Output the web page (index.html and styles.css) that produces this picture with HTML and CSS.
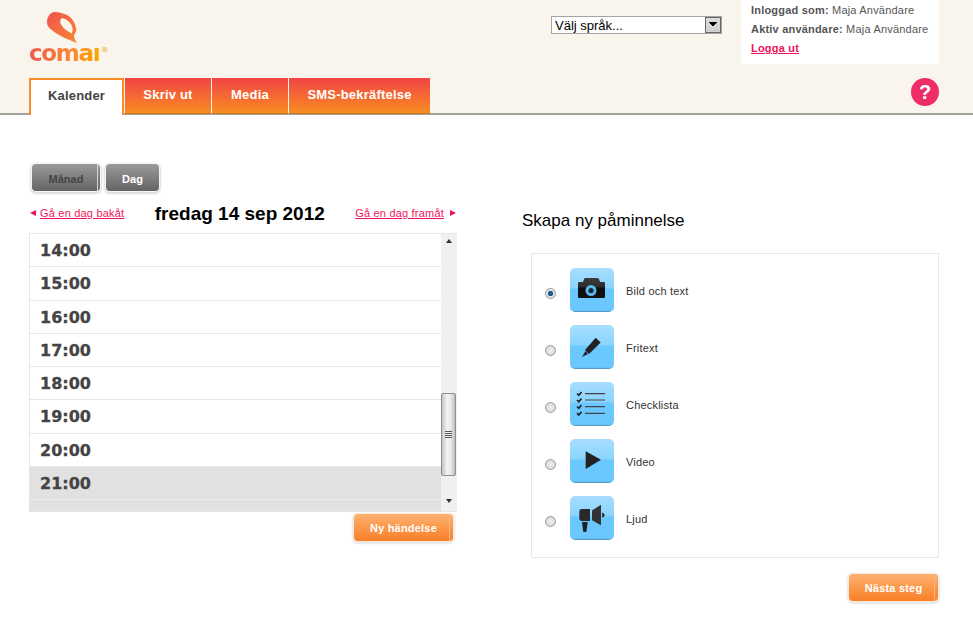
FILE: index.html
```html
<!DOCTYPE html>
<html lang="sv">
<head>
    <meta charset="UTF-8">
    <meta name="viewport" content="width=device-width, initial-scale=1.0">
    <title>Comai Kalender</title>
    <link rel="stylesheet" href="styles.css">
</head>
<body>
    <header class="site-header">
        <div class="header-top">
            <a class="logo" href="#">
                <svg class="logo-mark" viewBox="0 0 32 32" width="32" height="32">
                    <defs>
                        <linearGradient id="logo-grad" x1="0" y1="0" x2="1" y2="1">
                            <stop offset="0" stop-color="#f0504e"/>
                            <stop offset="1" stop-color="#f98a32"/>
                        </linearGradient>
                    </defs>
                    <path fill="url(#logo-grad)" fill-rule="evenodd" d="M7 0C3 1 0 5 0 10C0 14 2 16 5 18C9 22 19 27 30 31C28 28 27 26 27 23C29 20 30 18 29 16C28 11 26 8 24 6C21 3 18 2 14 1C12 0 9 0 7 0ZM15 6C13 8 12.500 10 14 12.500C16 16 20 19 24.500 21.500C26 19 26 16 24.500 13C23 10 19 7 15 6Z"/>
                </svg>
                <span class="logo-text">comaı<sup>®</sup></span>
            </a>
            <select class="lang-select">
                <option>Välj språk...</option>
            </select>
            <div class="user-box">
                <p><b>Inloggad som:</b> Maja Användare</p>
                <p><b>Aktiv användare:</b> Maja Användare</p>
                <p><a href="#" class="logout">Logga ut</a></p>
            </div>
        </div>
        <nav class="tabs">
            <a href="#" class="tab active">Kalender</a>
            <a href="#" class="tab tab-print">Skriv ut</a>
            <a href="#" class="tab tab-media">Media</a>
            <a href="#" class="tab tab-sms">SMS-bekräftelse</a>
            <a href="#" class="help">?</a>
        </nav>
    </header>

    <main class="content">
        <section class="calendar">
            <div class="view-buttons">
                <button class="view-button month">Månad</button>
                <button class="view-button day">Dag</button>
            </div>
            <div class="day-nav">
                <a href="#" class="day-link"><i class="arrow-left"></i><span>Gå en dag bakåt</span></a>
                <h2>fredag 14 sep 2012</h2>
                <a href="#" class="day-link"><span>Gå en dag framåt</span><i class="arrow-right"></i></a>
            </div>
            <div class="day-list">
                <div class="hours">
                    <div class="hour">14:00</div>
                    <div class="hour">15:00</div>
                    <div class="hour">16:00</div>
                    <div class="hour">17:00</div>
                    <div class="hour">18:00</div>
                    <div class="hour">19:00</div>
                    <div class="hour">20:00</div>
                    <div class="hour selected">21:00</div>
                    <div class="hour selected"></div>
                </div>
                <div class="scrollbar">
                    <i class="scroll-up"></i>
                    <div class="thumb"><span class="grip"></span></div>
                    <i class="scroll-down"></i>
                </div>
            </div>
            <div class="list-actions">
                <button class="orange-button new-event">Ny händelse</button>
            </div>
        </section>

        <section class="reminder">
            <h2>Skapa ny påminnelse</h2>
            <div class="reminder-box">
                <label class="type-row">
                    <input type="radio" name="type" checked>
                    <span class="type-icon">
                        <svg viewBox="0 0 44 44" width="44" height="44">
                            <defs>
                                <linearGradient id="cam-grad" x1="0" y1="0" x2="0" y2="1">
                                    <stop offset="0" stop-color="#3c3c3c"/>
                                    <stop offset="0.45" stop-color="#2c2c2c"/>
                                    <stop offset="0.5" stop-color="#0c0c0c"/>
                                    <stop offset="1" stop-color="#111"/>
                                </linearGradient>
                            </defs>
                            <path fill="url(#cam-grad)" d="M9 14h4l1-3q.4-1 1.500-1h12q1.100 0 1.500 1l1 3h4q1 0 1 1v14q0 1-1 1H9q-1 0-1-1V15q0-1 1-1z"/>
                            <circle cx="21" cy="22.500" r="5.500" fill="#58b8ee"/>
                            <circle cx="21" cy="22.500" r="2.600" fill="#15293a"/>
                        </svg>
                    </span>
                    <span class="type-name">Bild och text</span>
                </label>
                <label class="type-row">
                    <input type="radio" name="type">
                    <span class="type-icon">
                        <svg viewBox="0 0 44 44" width="44" height="44">
                            <path fill="#222" d="M25.700 12.700l5 4.800-11.700 11.500-4-4z"/>
                            <path fill="#222" d="M15.500 26l2.500 3-6 3z"/>
                        </svg>
                    </span>
                    <span class="type-name">Fritext</span>
                </label>
                <label class="type-row">
                    <input type="radio" name="type">
                    <span class="type-icon">
                        <svg viewBox="0 0 44 44" width="44" height="44">
                            <g fill="none" stroke="#444" stroke-width="1.200">
                                <path d="M15 11.700h20M15 18h20M15 24.700h20M15 31.300h20"/>
                            </g>
                            <g fill="none" stroke="#222" stroke-width="1.700">
                                <path d="M7 11.500l1.800 1.800 2.700-3.300M7 18l1.800 1.800 2.700-3.300M7 24.500l1.800 1.800 2.700-3.300M7 31.200l1.800 1.800 2.700-3.300"/>
                            </g>
                        </svg>
                    </span>
                    <span class="type-name">Checklista</span>
                </label>
                <label class="type-row">
                    <input type="radio" name="type">
                    <span class="type-icon">
                        <svg viewBox="0 0 44 44" width="44" height="44">
                            <path fill="#222" d="M15.700 12.300l15.300 8.400-15.300 9.300z"/>
                        </svg>
                    </span>
                    <span class="type-name">Video</span>
                </label>
                <label class="type-row">
                    <input type="radio" name="type">
                    <span class="type-icon">
                        <svg viewBox="0 0 44 44" width="44" height="44">
                            <path fill="#2a2a2a" d="M12 13h8v12h-8q-2.700 0-2.700-2.700v-6.600q0-2.700 2.700-2.700z"/>
                            <path fill="#333" d="M22 14.500l9-5.800v20.600l-9-5z"/>
                            <path fill="#333" d="M32 16.700c3.500 0 3.500 4.600 0 4.600z"/>
                            <path fill="#222" d="M12 26h5.700l-1.200 9.500q-1.700 1-3.300 0z"/>
                        </svg>
                    </span>
                    <span class="type-name">Ljud</span>
                </label>
            </div>
            <div class="reminder-actions">
                <button class="orange-button next-step">Nästa steg</button>
            </div>
        </section>
    </main>
</body>
</html>
```

FILE: styles.css
```css
* {
    box-sizing: border-box;
}

body {
    font-family: "Liberation Sans", Arial, sans-serif;
    background-color: #fff;
    color: #444;
    margin: 0;
    height: 644px;
    overflow: hidden;
}

.site-header {
    background-color: #f9f4ec;
    border-bottom: 2px solid #a3a29c;
    height: 115px;
    padding: 0 34px 0 29px;
}

.header-top {
    display: flex;
    align-items: flex-start;
    height: 78px;
}

.logo {
    display: flex;
    flex-direction: column;
    width: 522px;
    padding-top: 12px;
    text-decoration: none;
}

.logo-mark {
    margin-left: 18px;
    display: block;
}

.logo-text {
    font-family: "DejaVu Sans", sans-serif;
    font-weight: bold;
    font-size: 23px;
    line-height: 18px;
    letter-spacing: -1.300px;
    width: 80px;
    background: linear-gradient(90deg, #ee5a50, #f97f38 45%, #fca800 88%);
    -webkit-background-clip: text;
    background-clip: text;
    color: transparent;
}

.logo-text sup {
    font-size: 7px;
    font-weight: normal;
    letter-spacing: 0;
    line-height: 0;
    vertical-align: 9px;
    margin-left: 2px;
    color: #f5c48c;
}

.lang-select {
    appearance: none;
    width: 171px;
    height: 18px;
    margin: 16px 19px 0 0;
    padding: 0 0 0 3px;
    font-family: "Liberation Sans", Arial, sans-serif;
    font-size: 13px;
    color: #000;
    border: 1px solid #a5a5a5;
    border-radius: 0;
    background-color: #fff;
    background-image:
        linear-gradient(45deg, transparent 50%, #000 50%),
        linear-gradient(-45deg, transparent 50%, #000 50%),
        linear-gradient(#dcdcdc, #d0d0d0),
        linear-gradient(#666, #666);
    background-size: 4px 4px, 4px 4px, 14px 14px, 16px 16px;
    background-position: right 8px top 5px, right 4px top 5px, right 1px top 1px, right 0 top 0;
    background-repeat: no-repeat;
}

.user-box {
    background-color: #fff;
    width: 198px;
    height: 64px;
    padding: 1px 10px 0;
}

.user-box p {
    margin: 0;
    font-size: 11px;
    line-height: 19px;
    letter-spacing: 0.2px;
    color: #555;
    white-space: nowrap;
}

.logout {
    color: #f0145a;
    font-weight: bold;
}

.tabs {
    display: flex;
    height: 37px;
    align-items: flex-start;
    gap: 1px;
}

.tab {
    display: block;
    height: 36px;
    line-height: 34px;
    text-align: center;
    color: #fff;
    font-size: 13px;
    font-weight: bold;
    letter-spacing: 0.2px;
    text-decoration: none;
    background: linear-gradient(#f04444, #f98c22);
    border-bottom: 1px solid #c97a1c;
}

.tab.active {
    width: 95px;
    height: 37px;
    line-height: 31px;
    color: #444;
    background: #fff;
    border: 2px solid #f98c22;
    border-bottom: none;
}

.tab-print {
    width: 86px;
}

.tab-media {
    width: 76px;
}

.tab-sms {
    width: 141px;
}

.help {
    margin-left: auto;
    width: 28px;
    height: 28px;
    border-radius: 50%;
    background-color: #ee2d67;
    color: #fff;
    font-size: 20px;
    font-weight: bold;
    line-height: 28px;
    text-align: center;
    text-decoration: none;
}

.content {
    display: flex;
    align-items: flex-start;
    padding: 49px 34px 0 29px;
}

.calendar {
    width: 428px;
}

.view-buttons {
    display: flex;
    gap: 6px;
    padding-left: 3px;
}

.view-button {
    height: 27px;
    padding: 3px 0 0;
    border: none;
    border-radius: 4px;
    font-family: inherit;
    font-size: 11px;
    font-weight: bold;
    background: linear-gradient(#9a9a9a, #646464);
    box-shadow: 0 0 0 1px #f4f4f4, 0 1px 2px 2px #ddd;
    cursor: pointer;
}

.month {
    width: 68px;
    color: #444;
    background:
        linear-gradient(90deg, transparent 65px, #d4d4d4 65px, #d4d4d4 66px, transparent 66px),
        linear-gradient(#9a9a9a, #646464);
}

.day {
    width: 53px;
    color: #fff;
}

.day-nav {
    display: flex;
    align-items: center;
    justify-content: space-between;
    height: 42px;
    padding: 2px 1px 0;
}

.day-nav h2 {
    margin: 1px 0 0;
    font-size: 19px;
    color: #000;
}

.day-link {
    display: flex;
    align-items: center;
    gap: 4px;
    font-size: 11px;
    letter-spacing: 0.2px;
    color: #f0145a;
}

.arrow-left,
.arrow-right {
    width: 0;
    height: 0;
    border-top: 3.500px solid transparent;
    border-bottom: 3.500px solid transparent;
}

.arrow-left {
    border-right: 6px solid #f0145a;
}

.arrow-right {
    border-left: 6px solid #f0145a;
    margin-left: 2px;
}

.day-list {
    display: flex;
    height: 279px;
    border: 1px solid #e6e6e6;
    border-right: none;
    overflow: hidden;
}

.hours {
    flex: 1;
}

.hour {
    height: 33.300px;
    line-height: 34px;
    padding-left: 10px;
    font-family: "DejaVu Sans", sans-serif;
    font-size: 16px;
    font-weight: bold;
    -webkit-text-stroke: 0.3px #444;
    color: #444;
    border-bottom: 1px solid #e6e6e6;
}

.hour.selected {
    background-color: #e1e1e1;
    border-bottom-color: #ebebeb;
}

.scrollbar {
    display: flex;
    flex-direction: column;
    align-items: center;
    width: 16px;
    background-color: #f0f0f0;
}

.scroll-up,
.scroll-down {
    width: 0;
    height: 0;
    border-left: 3.500px solid transparent;
    border-right: 3.500px solid transparent;
}

.scroll-up {
    margin-top: 5px;
    border-bottom: 4px solid #333;
}

.scroll-down {
    margin-top: 23px;
    border-top: 4px solid #333;
}

.thumb {
    display: flex;
    align-items: center;
    justify-content: center;
    width: 15px;
    height: 83px;
    margin-top: 150px;
    margin-right: 1px;
    border: 1px solid #8f8f8f;
    border-radius: 2px;
    background: linear-gradient(90deg, #c4c4c4, #f4f4f4 40%, #e8e8e8 70%, #bbb);
}

.grip {
    width: 7px;
    height: 7px;
    background: repeating-linear-gradient(#555 0, #555 1px, transparent 1px, transparent 2px);
}

.list-actions {
    display: flex;
    justify-content: flex-end;
    padding: 2px 4px 0 0;
}

.orange-button {
    height: 27px;
    padding: 0;
    border: none;
    border-radius: 4px;
    font-family: inherit;
    font-size: 11px;
    font-weight: bold;
    letter-spacing: 0.2px;
    color: #fff;
    box-shadow: 0 0 0 1px #fbe9da, 0 1px 2px 2px #e6e6e6;
    cursor: pointer;
}

.new-event {
    width: 99px;
    background:
        linear-gradient(90deg, transparent 95px, #fbb680 95px, #fbb680 96px, transparent 96px),
        linear-gradient(#fdb272, #f97f26);
}

.next-step {
    width: 89px;
    background:
        linear-gradient(90deg, transparent 85px, #fbb680 85px, #fbb680 86px, transparent 86px),
        linear-gradient(#fdb272, #f97f26);
}

.reminder {
    width: 417px;
    margin-left: 65px;
    padding-top: 48px;
}

.reminder h2 {
    margin: 0;
    font-size: 17px;
    font-weight: normal;
    line-height: 18px;
    color: #000;
}

.reminder-box {
    display: flex;
    flex-direction: column;
    height: 305px;
    margin: 23px 0 0 9px;
    padding-top: 7px;
    border: 1px solid #e6e6e6;
}

.type-row {
    display: flex;
    align-items: center;
    height: 57px;
    padding-left: 13px;
    flex: none;
}

.type-row input {
    appearance: none;
    width: 11px;
    height: 11px;
    margin: 8px 14px 0 0;
    border: 1px solid #999;
    border-radius: 50%;
    background: radial-gradient(circle, #f2f2f2, #d0d0d0);
}

.type-row input:checked {
    background: radial-gradient(circle, #1c5a90 0, #1c5a90 2.500px, #e4e4e4 3px);
}

.type-icon {
    width: 44px;
    height: 44px;
    margin-right: 12px;
    border-radius: 5px;
    background: linear-gradient(#a8deff 0, #8ad4ff 45%, #6ac8ff 48%, #6ac8ff 96%, #4a8cb4 100%);
}

.type-icon svg {
    display: block;
}

.type-name {
    font-size: 11px;
    letter-spacing: 0.2px;
    color: #333;
    margin-top: 3px;
}

.reminder-actions {
    display: flex;
    justify-content: flex-end;
    padding: 16px 1px 0 0;
}
```
